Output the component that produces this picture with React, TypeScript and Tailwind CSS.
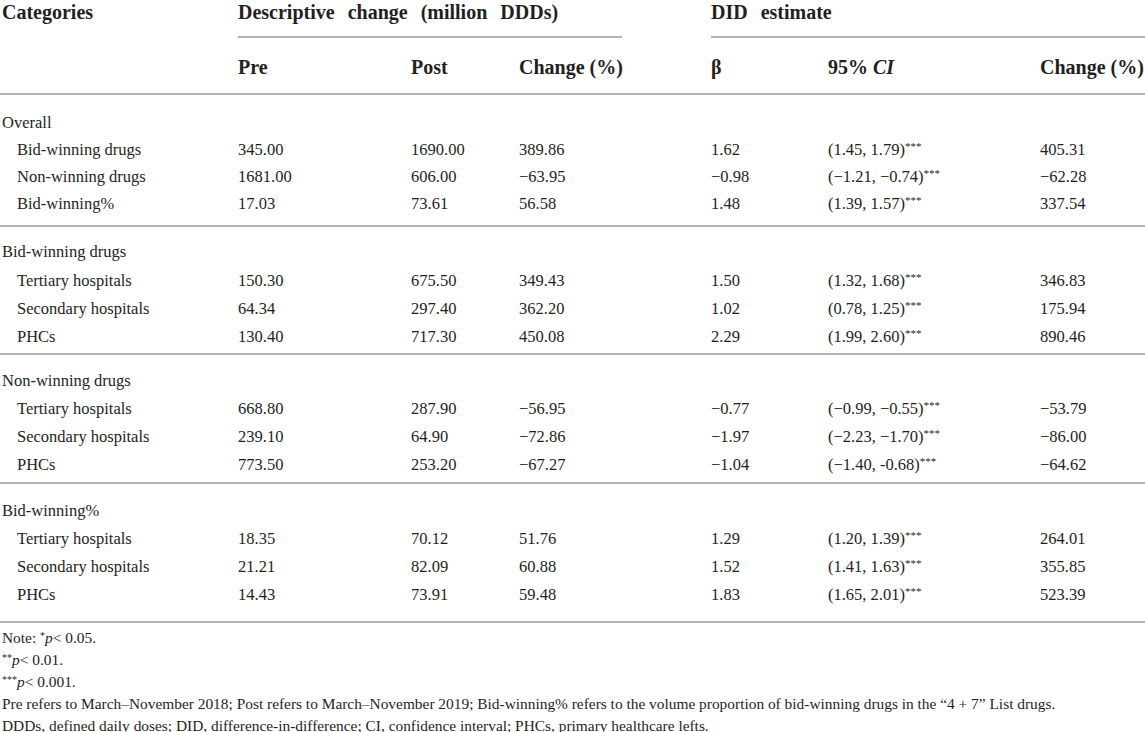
import React from "react";

type Row = { label: string; v: string[] };
type Group = { title: string; rows: Row[]; pt: string; pb: string; rowH: string; titleH: string };

const Stars = () => (
  <span className="relative -top-[5px] text-[11px] leading-none">***</span>
);

const groups: Group[] = [
  {
    title: "Overall",
    pt: "pt-[15px]",
    pb: "pb-[7px]",
    rowH: "h-[27px]",
    titleH: "h-[27px]",
    rows: [
      { label: "Bid-winning drugs", v: ["345.00", "1690.00", "389.86", "1.62", "(1.45, 1.79)", "405.31"] },
      { label: "Non-winning drugs", v: ["1681.00", "606.00", "\u221263.95", "\u22120.98", "(\u22121.21, \u22120.74)", "\u221262.28"] },
      { label: "Bid-winning%", v: ["17.03", "73.61", "56.58", "1.48", "(1.39, 1.57)", "337.54"] },
    ],
  },
  {
    title: "Bid-winning drugs",
    pt: "pt-[10px]",
    pb: "pb-[2px]",
    rowH: "h-[28px]",
    titleH: "h-[30px]",
    rows: [
      { label: "Tertiary hospitals", v: ["150.30", "675.50", "349.43", "1.50", "(1.32, 1.68)", "346.83"] },
      { label: "Secondary hospitals", v: ["64.34", "297.40", "362.20", "1.02", "(0.78, 1.25)", "175.94"] },
      { label: "PHCs", v: ["130.40", "717.30", "450.08", "2.29", "(1.99, 2.60)", "890.46"] },
    ],
  },
  {
    title: "Non-winning drugs",
    pt: "pt-[12px]",
    pb: "pb-[3px]",
    rowH: "h-[28px]",
    titleH: "h-[28px]",
    rows: [
      { label: "Tertiary hospitals", v: ["668.80", "287.90", "\u221256.95", "\u22120.77", "(\u22120.99, \u22120.55)", "\u221253.79"] },
      { label: "Secondary hospitals", v: ["239.10", "64.90", "\u221272.86", "\u22121.97", "(\u22122.23, \u22121.70)", "\u221286.00"] },
      { label: "PHCs", v: ["773.50", "253.20", "\u221267.27", "\u22121.04", "(\u22121.40, -0.68)", "\u221264.62"] },
    ],
  },
  {
    title: "Bid-winning%",
    pt: "pt-[13px]",
    pb: "pb-[12px]",
    rowH: "h-[28px]",
    titleH: "h-[28px]",
    rows: [
      { label: "Tertiary hospitals", v: ["18.35", "70.12", "51.76", "1.29", "(1.20, 1.39)", "264.01"] },
      { label: "Secondary hospitals", v: ["21.21", "82.09", "60.88", "1.52", "(1.41, 1.63)", "355.85"] },
      { label: "PHCs", v: ["14.43", "73.91", "59.48", "1.83", "(1.65, 2.01)", "523.39"] },
    ],
  },
];

const cols = "grid grid-cols-[238px_173px_108px_192px_117px_212px_1fr]";

export default function App() {
  return (
    <div
      className="w-[1145px] h-[732px] overflow-hidden bg-white text-[#231f20]"
      style={{ fontFamily: '"Liberation Serif", "Times New Roman", serif' }}
    >
      {/* Header */}
      <div className="border-b-2 border-[#b3b3b3] text-[20px] font-bold">
        <div className={`${cols} h-[38px]`}>
          <div className="pl-[2px] leading-[24px]">Categories</div>
          <div className="col-span-3 flex flex-col">
            <div className="leading-[24px] [word-spacing:8px]">Descriptive change (million DDDs)</div>
            <div className="mt-[12px] h-[2px] w-[384px] bg-[#b3b3b3]" />
          </div>
          <div className="col-span-3 flex flex-col">
            <div className="leading-[24px] [word-spacing:8px]">DID estimate</div>
            <div className="mt-[12px] h-[2px] w-full bg-[#b3b3b3]" />
          </div>
        </div>
        <div className={`${cols} h-[55px] items-center pt-[3px]`}>
          <div />
          <div>Pre</div>
          <div>Post</div>
          <div>Change (%)</div>
          <div>&beta;</div>
          <div>
            95% <i>CI</i>
          </div>
          <div>Change (%)</div>
        </div>
      </div>

      {/* Body */}
      <div className="text-[16.5px]">
        {groups.map((g) => (
          <div key={g.title} className={`border-b-2 border-[#b3b3b3] ${g.pt} ${g.pb}`}>
            <div className={`${cols} ${g.titleH} items-center`}>
              <div className="pl-[2px]">{g.title}</div>
            </div>
            {g.rows.map((r) => (
              <div key={r.label} className={`${cols} ${g.rowH} items-center`}>
                <div className="pl-[17px]">{r.label}</div>
                {r.v.map((val, i) => (
                  <div key={i}>
                    {val}
                    {i === 4 && <Stars />}
                  </div>
                ))}
              </div>
            ))}
          </div>
        ))}
      </div>

      {/* Notes */}
      <div className="pt-[4px] pl-[2px] text-[15.4px] leading-[22px]">
        <div>
          Note: <span className="relative -top-[4px] text-[10px] leading-none">*</span>
          <i>p</i>&lt; 0.05.
        </div>
        <div>
          <span className="relative -top-[4px] text-[10px] leading-none">**</span>
          <i>p</i>&lt; 0.01.
        </div>
        <div>
          <span className="relative -top-[4px] text-[10px] leading-none">***</span>
          <i>p</i>&lt; 0.001.
        </div>
        <div>
          Pre refers to March–November 2018; Post refers to March–November 2019; Bid-winning% refers to the volume
          proportion of bid-winning drugs in the “4 + 7” List drugs.
        </div>
        <div>
          DDDs, defined daily doses; DID, difference-in-difference; CI, confidence interval; PHCs, primary healthcare
          lefts.
        </div>
      </div>
    </div>
  );
}
